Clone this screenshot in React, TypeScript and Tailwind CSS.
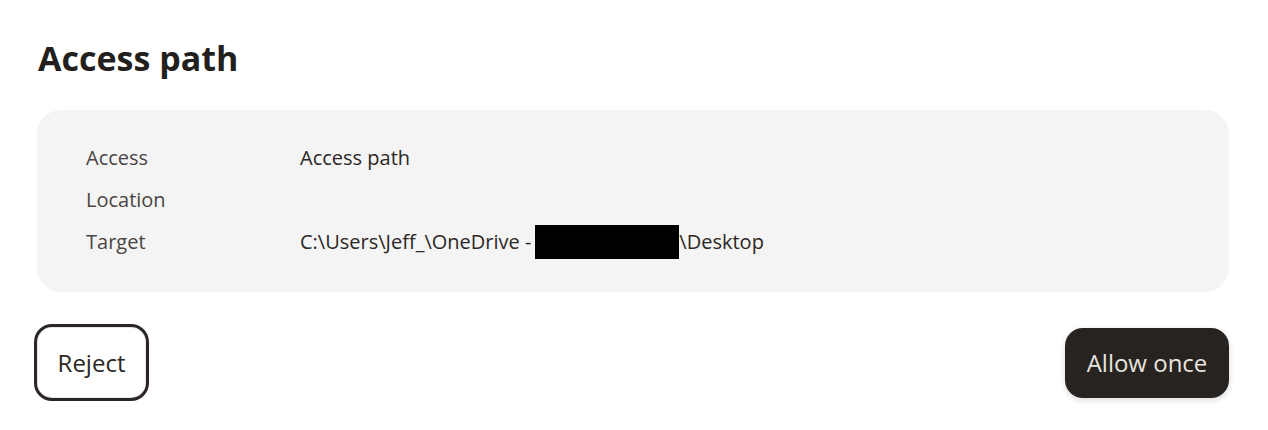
import React from "react";

export default function App() {
  return (
    <div
      className="w-[1268px] h-[430px] bg-white px-[37px] pt-[34px] text-[#2b2725]"
      style={{ fontFamily: '"Open Sans", "Noto Sans", sans-serif' }}
    >
      <h1 className="text-[34px] font-bold leading-[48px] text-[#231f1d] ml-px">Access path</h1>
      <div className="mt-[28px] w-[1192px] h-[182px] rounded-[24px] bg-[#f4f4f4] pl-[49px] pt-[34px]">
        <div className="grid grid-cols-[214px_1fr] gap-y-[14px] text-[20px] leading-[28px]">
          <div className="text-[#4a4542]">Access</div>
          <div className="text-[#2b2725]">Access path</div>
          <div className="text-[#4a4542]">Location</div>
          <div></div>
          <div className="text-[#4a4542]">Target</div>
          <div className="text-[#2b2725] flex items-center h-[28px]">
            <span>C:\Users\Jeff_\OneDrive - </span>
            <span className="ml-[4px] -my-[3px] inline-block w-[144px] h-[34px] bg-black"></span>
            <span>\Desktop</span>
          </div>
        </div>
      </div>
      <div className="mt-[32px] flex items-center justify-between w-[1195px] -ml-[3px]">
        <button className="w-[115px] h-[77px] rounded-[18px] border-[3px] border-[#2b2523] bg-white text-[24px] text-[#2b2725] shadow-[inset_0_0_0_1px_#e6e6e6]">
          Reject
        </button>
        <button className="w-[164px] h-[70px] rounded-[18px] bg-[#272320] text-[24px] text-[#e8e4df] shadow-[0_2px_6px_rgba(0,0,0,0.15)]">
          Allow once
        </button>
      </div>
    </div>
  );
}
